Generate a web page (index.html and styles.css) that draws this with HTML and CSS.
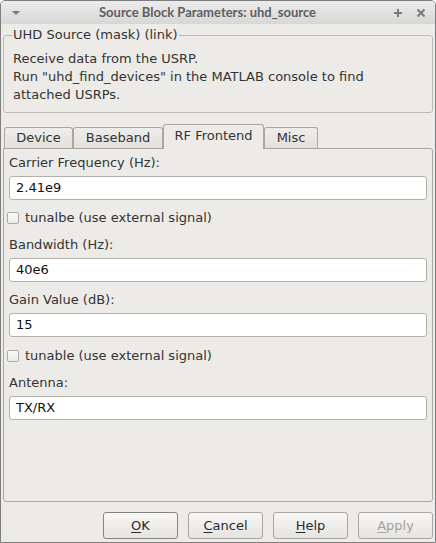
FILE: index.html
```html
<!DOCTYPE html>
<html>
<head>
<meta charset="utf-8">
<link rel="stylesheet" href="styles.css">
</head>
<body>
<div class="window">
  <div class="titlebar">
    <svg class="menu-arrow" width="10" height="6" viewBox="0 0 10 6"><path d="M1 1 L9 1 L5 5 Z" fill="#7b7b7b"/></svg>
    <span class="title">Source Block Parameters: uhd_source</span>
    <svg class="ctl" width="10" height="10" viewBox="0 0 10 10"><path d="M5 1 V9 M1 5 H9" stroke="#7a7a7a" stroke-width="2"/></svg>
    <svg class="ctl" width="10" height="10" viewBox="0 0 10 10"><path d="M1.5 1.5 L8.5 8.5 M8.5 1.5 L1.5 8.5" stroke="#7a7a7a" stroke-width="2"/></svg>
  </div>
  <div class="content">
    <fieldset class="group">
      <legend>UHD Source (mask) (link)</legend>
      <p class="desc">Receive data from the USRP.<br>Run "uhd_find_devices" in the MATLAB console to find<br>attached USRPs.</p>
    </fieldset>
    <div class="tabs">
      <div class="tab t-device">Device</div>
      <div class="tab t-baseband">Baseband</div>
      <div class="tab t-rf active">RF Frontend</div>
      <div class="tab t-misc">Misc</div>
    </div>
    <div class="pane">
      <div class="label">Carrier Frequency (Hz):</div>
      <div class="input">2.41e9</div>
      <div class="check"><span class="box"></span>tunalbe (use external signal)</div>
      <div class="label">Bandwidth (Hz):</div>
      <div class="input">40e6</div>
      <div class="label">Gain Value (dB):</div>
      <div class="input">15</div>
      <div class="check second"><span class="box"></span>tunable (use external signal)</div>
      <div class="label">Antenna:</div>
      <div class="input">TX/RX</div>
    </div>
    <div class="buttons">
      <div class="btn default"><u>O</u>K</div>
      <div class="btn"><u>C</u>ancel</div>
      <div class="btn"><u>H</u>elp</div>
      <div class="btn disabled"><u>A</u>pply</div>
    </div>
  </div>
</div>
</body>
</html>
```
FILE: styles.css
```css
html, body {
  margin: 0;
  padding: 0;
  background: #ffffff;
}
.window {
  width: 436px;
  height: 543px;
  box-sizing: border-box;
  border: 1px solid #7e7e7e;
  border-radius: 5px 5px 0 0;
  overflow: hidden;
  background: #edebe7;
  display: flex;
  flex-direction: column;
  font-family: "DejaVu Sans", sans-serif;
  font-size: 13px;
  color: #333333;
}
.titlebar {
  height: 23px;
  flex: none;
  display: flex;
  align-items: center;
  background: linear-gradient(#ececec, #d7d7d7);
  padding: 0 9px 0 10px;
}
.menu-arrow {
  flex: none;
  margin-top: 1px;
}
.title {
  flex: 1;
  text-align: center;
  font-family: Lato, sans-serif;
  font-weight: bold;
  font-size: 13px;
  color: #5e5e5e;
  padding-left: 14px;
  padding-bottom: 1px;
}
.ctl {
  flex: none;
  margin-left: 13px;
}
.content {
  flex: 1;
  display: flex;
  flex-direction: column;
  padding: 2px 2px 2px 2px;
}
.group {
  margin: 0;
  border: 1px solid #bdbab4;
  border-radius: 3px;
  padding: 6px 8px 8px 8px;
  min-width: 0;
}
.group legend {
  padding: 0 1px;
  line-height: 18px;
  font-size: 13px;
  color: #333333;
}
.desc {
  margin: 0 0 0 1px;
  line-height: 18px;
}
.tabs {
  display: flex;
  align-items: flex-end;
  margin-top: 11px;
  height: 25px;
  padding-left: 1px;
  position: relative;
  z-index: 1;
}
.tab {
  box-sizing: border-box;
  height: 21px;
  margin-bottom: 1px;
  border: 1px solid #aaa7a1;
  border-bottom: none;
  border-radius: 3px 3px 0 0;
  background: linear-gradient(#efedea, #e3e0dc);
  text-align: center;
  line-height: 20px;
  color: #333333;
}
.t-device { width: 69px; }
.t-baseband { width: 90px; }
.t-rf { width: 101px; }
.t-misc { width: 54px; }
.tab.active {
  height: 25px;
  margin-bottom: 0;
  background: #edebe7;
  line-height: 21px;
}
.pane {
  margin-top: -1px;
  height: 354px;
  box-sizing: border-box;
  border: 1px solid #aaa7a1;
  border-radius: 0 3px 3px 3px;
  padding: 5px 5px;
  display: flex;
  flex-direction: column;
}
.label {
  line-height: 18px;
  margin-bottom: 4px;
}
.input {
  box-sizing: border-box;
  height: 24px;
  border: 1px solid #b3b0aa;
  border-radius: 3px;
  background: #ffffff;
  padding-left: 6px;
  line-height: 22px;
  color: #111111;
  margin-bottom: 9px;
}
.check {
  display: flex;
  align-items: center;
  line-height: 18px;
  margin-left: -2px;
  margin-bottom: 9px;
}
.check.second {
  margin-top: 1px;
}
.box {
  width: 12px;
  height: 12px;
  box-sizing: border-box;
  border: 1px solid #aeaba6;
  border-radius: 2px;
  background: linear-gradient(#fafafa, #ebebeb);
  margin-right: 6px;
}
.buttons {
  margin-top: 10px;
  display: flex;
  justify-content: flex-end;
  gap: 10px;
}
.btn {
  box-sizing: border-box;
  width: 75px;
  height: 27px;
  border: 1px solid #aaa7a2;
  border-radius: 3px;
  background: linear-gradient(#f8f7f6, #e6e4e1);
  text-align: center;
  line-height: 25px;
  color: #2a2a2a;
}
.btn.default {
  border-color: #87847f;
}
.btn.disabled {
  color: #a5a29d;
}
.btn u {
  text-decoration-thickness: 1px;
  text-underline-offset: 2px;
}
```
